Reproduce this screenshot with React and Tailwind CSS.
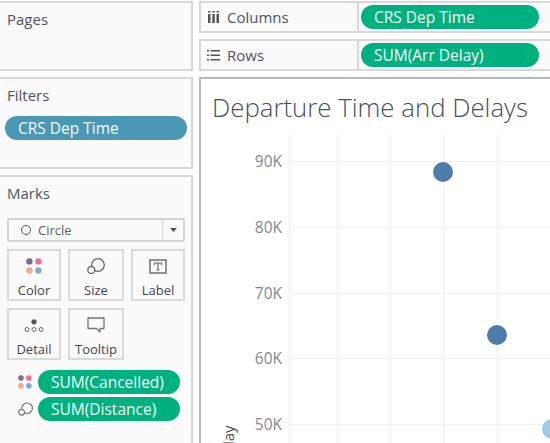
const F = { fontFamily: '"Open Sans", "Noto Sans", sans-serif' };

const Pill = ({ children, className = "" }) => (
  <div className={`flex items-center rounded-full pt-px text-[15.5px] leading-none text-[#f4fbf8] ${className}`}>{children}</div>
);

const ColorDots = ({ size = 16 }) => (
  <svg width={size} height={size} viewBox="0 0 16 16">
    <circle cx="3.400" cy="3.400" r="3.200" fill="#7f6a94" />
    <circle cx="12.400" cy="3.400" r="3.200" fill="#f0728a" />
    <circle cx="3.400" cy="12.400" r="3.200" fill="#f2ab82" />
    <circle cx="12.400" cy="12.400" r="3.200" fill="#82a8d4" />
  </svg>
);

const SizeIcon = ({ width = 18, height = 16 }) => (
  <svg width={width} height={height} viewBox="0 0 18 16" fill="none" stroke="#666" strokeWidth="1.300">
    <circle cx="11" cy="7" r="6.300" fill="#fafafa" />
    <circle cx="4.300" cy="12" r="3.500" fill="#fafafa" />
  </svg>
);

const Shelf = ({ icon, label, children }) => (
  <div className="flex h-[32px] border-y-2 border-l-2 border-[#d8d8d8] bg-[#fafafa]">
    <div className="flex w-[158px] shrink-0 items-center border-r-2 border-[#d8d8d8] pl-[6px] text-[15px] text-[#4f5560]">
      <span className="flex w-[20px] justify-start">{icon}</span>
      <span>{label}</span>
    </div>
    <div className="flex flex-1 items-center pl-[2px]">{children}</div>
  </div>
);

const MarkCard = ({ w, icon, label }) => (
  <div className={`flex h-[52px] flex-col items-center border-2 border-[#dadada] ${w}`}>
    <div className="flex h-[24px] items-end justify-center pb-[1px]">{icon}</div>
    <div className="mt-[7px] text-[13px] leading-[16px] text-[#3f4650]">{label}</div>
  </div>
);

const Panel = ({ className = "", children }) => (
  <div className={`border-t-2 border-r-2 border-[#d8d8d8] bg-[#fafafa] ${className}`}>{children}</div>
);

function Chart() {
  const xs = [288, 336, 389, 442, 496, 549];
  const ys = [161, 227, 293, 358, 424];
  const labels = ["90K", "80K", "70K", "60K", "50K"];
  return (
    <svg width="350" height="310" viewBox="200 133 350 310" className="block" style={F}>
      {xs.map((x) => <line key={x} x1={x + 0.5} x2={x + 0.5} y1="133" y2="443" stroke="#f1f1f1" />)}
      {ys.map((y) => <line key={y} x1="288" x2="550" y1={y + 0.5} y2={y + 0.5} stroke="#f1f1f1" />)}
      {labels.map((l, i) => (
        <text key={l} x="281" y={ys[i] + 6} textAnchor="end" fontSize="15.500" fill="#84888f">{l}</text>
      ))}
      <circle cx="442" cy="172" r="10" fill="#4e7dac" />
      <circle cx="496" cy="335" r="10" fill="#4e7dac" />
      <circle cx="551" cy="429" r="10" fill="#9fc9e6" />
      <text transform="translate(233 445) rotate(-90)" x="0" y="0" fontSize="15" fill="#444">lay</text>
    </svg>
  );
}

export default function App() {
  return (
    <div className="grid h-[443px] w-[550px] grid-cols-[193px_351px] gap-x-[6px] overflow-hidden bg-white pt-px" style={F}>
      <div className="flex flex-col gap-[6px]">
        <Panel className="h-[70px] border-b-2 pl-[7px] pt-[6px] text-[15px] leading-5 text-[#4f5560]">Pages</Panel>
        <Panel className="h-[92px] border-b-2 pt-[6px]">
          <div className="pl-[7px] text-[15px] leading-5 text-[#4f5560]">Filters</div>
          <Pill className="ml-[5px] mt-[11px] h-[24px] w-[182px] bg-[#4b97b6] pl-[13px] text-[#f2f9fb]">CRS Dep Time</Pill>
        </Panel>
        <Panel className="flex-1 pl-[7px] pt-[6px]">
          <div className="text-[15px] leading-5 text-[#4f5560]">Marks</div>
          <div className="mt-[15px] flex h-[24px] w-[178px] items-center rounded-[2px] border-2 border-[#d4d4d4] bg-[#fafafa] text-[13px] text-[#5a5f68]">
            <span className="ml-[12px] h-[10px] w-[10px] rounded-full border-[1.5px] border-[#555]" />
            <span className="ml-[7px] flex-1 pt-px">Circle</span>
            <span className="flex h-full w-[21px] items-center justify-center border-l border-[#d4d4d4]">
              <svg width="7" height="4" viewBox="0 0 7 4"><path d="M0 0h7L3.500 4z" fill="#555" /></svg>
            </span>
          </div>
          <div className="mt-[7px] flex gap-[7px]">
            <MarkCard w="w-[54px]" icon={<ColorDots />} label="Color" />
            <MarkCard w="w-[56px]" icon={<SizeIcon />} label="Size" />
            <MarkCard w="w-[54px]" icon={
              <svg width="18" height="15" viewBox="0 0 18 15">
                <rect x="1" y="1" width="16" height="13" fill="none" stroke="#777" strokeWidth="1.600" />
                <path d="M5.500 6V4h7v2M9 4v7M7.500 11h3" fill="none" stroke="#666" strokeWidth="1.200" />
              </svg>
            } label="Label" />
          </div>
          <div className="mt-[7px] flex gap-[7px]">
            <MarkCard w="w-[54px]" icon={
              <svg width="20" height="14" viewBox="0 0 20 14" fill="none" stroke="#666">
                <circle cx="10" cy="2.800" r="2.600" fill="#555" stroke="none" />
                <circle cx="3" cy="10.500" r="2" /><circle cx="10" cy="10.500" r="2" /><circle cx="17" cy="10.500" r="2" />
              </svg>
            } label="Detail" />
            <MarkCard w="w-[56px]" icon={
              <svg width="18" height="16" viewBox="0 0 18 16">
                <path d="M1 1h16v10.500h-4v3.500l-3.500-3.500h-8.500z" fill="none" stroke="#777" strokeWidth="1.300" strokeLinejoin="round" />
              </svg>
            } label="Tooltip" />
          </div>
          <div className="mt-[10px] flex items-center">
            <span className="ml-[11px] w-[20px]"><ColorDots size={14} /></span>
            <Pill className="h-[24px] w-[142px] bg-[#00b180] pl-[13px]">SUM(Cancelled)</Pill>
          </div>
          <div className="mt-[3px] flex items-center">
            <span className="ml-[11px] w-[20px]"><SizeIcon width={15} height={14} /></span>
            <Pill className="h-[24px] w-[142px] bg-[#00b180] pl-[13px]">SUM(Distance)</Pill>
          </div>
        </Panel>
      </div>
      <div className="flex flex-col gap-[6px]">
        <Shelf label="Columns" icon={
          <svg width="11" height="12" viewBox="0 0 11 12" fill="#555" className="ml-px">
            <path d="M0 3h2.500v9H0zM4.300 3h2.500v9H4.300zM8.500 3H11v9H8.500zM0 0h2.500v1.500H0zM4.300 0h2.500v1.500H4.300zM8.500 0H11v1.500H8.500z" />
          </svg>
        }>
          <Pill className="h-[24px] w-[178px] bg-[#00b180] pl-[13px]">CRS Dep Time</Pill>
        </Shelf>
        <Shelf label="Rows" icon={
          <svg width="13" height="11" viewBox="0 0 13 11" fill="#555">
            <path d="M0 0h2v1.500H0zM3.500 0H13v1.500H3.500zM0 4.500h2V6H0zM3.500 4.500H13V6H3.500zM0 9h2v1.500H0zM3.500 9H13v1.500H3.500z" />
          </svg>
        }>
          <Pill className="h-[24px] w-[178px] bg-[#00b180] pl-[13px]">SUM(Arr Delay)</Pill>
        </Shelf>
        <div className="flex-1 border-t-2 border-l-2 border-[#b9b9b9] bg-white">
          <div className="h-[54px] pl-[11px] pt-[10px] text-[25.8px] font-light leading-[36px] text-[#4a4f62]">Departure Time and Delays</div>
          <Chart />
        </div>
      </div>
    </div>
  );
}
